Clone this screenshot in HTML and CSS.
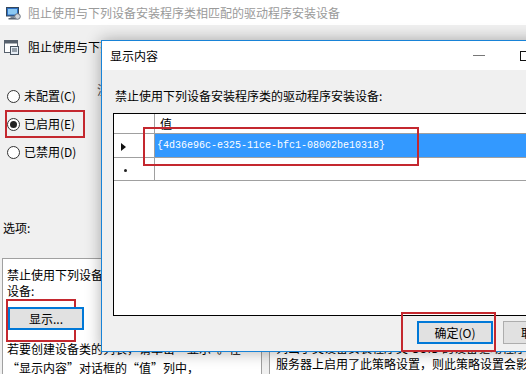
FILE: index.html
```html
<!DOCTYPE html>
<html lang="zh-CN">
<head>
  <meta charset="UTF-8" />
  <meta name="viewport" content="width=device-width, initial-scale=1.0"/>
  <title>显示内容</title>
  <link rel="stylesheet" href="styles.css">
</head>
<body>
  <div class="screen">
    <!-- 策略编辑窗口 -->
    <div class="titlebar">
      <svg class="app-icon" viewBox="0 0 16 16">
        <rect x="1.5" y="2.5" width="12" height="8.5" fill="#2c6fc4" stroke="#34465a"/>
        <rect x="3" y="4" width="9" height="5.5" fill="#8cc8f2"/>
        <rect x="5.5" y="11" width="4" height="2" fill="#7a8594"/>
        <rect x="3.5" y="13" width="8" height="1.5" fill="#5d6673"/>
        <circle cx="12.5" cy="11.5" r="2.8" fill="#d0d4da" stroke="#6b7480"/>
      </svg>
      <span>阻止使用与下列设备安装程序类相匹配的驱动程序安装设备</span>
    </div>

    <div class="header">
      <svg class="policy-icon" viewBox="0 0 15 15">
        <rect x="0.5" y="0.5" width="13" height="12" fill="#fff" stroke="#56606c"/>
        <rect x="0.5" y="0.5" width="13" height="3" fill="#56606c"/>
        <rect x="6.5" y="6.5" width="8" height="8" fill="#e6edf5" stroke="#46525f"/>
        <line x1="8" y1="9" x2="13" y2="9" stroke="#46525f"/>
        <line x1="8" y1="11" x2="13" y2="11" stroke="#46525f"/>
      </svg>
      <span>阻止使用与下列设备安装程序类相匹配的驱动程序安装设备</span>
    </div>

    <div class="settings">
      <div class="states">
        <div class="state"><span class="radio"></span>未配置(C)</div>
        <div class="state marked"><span class="radio checked"></span>已启用(E)</div>
        <div class="state"><span class="radio"></span>已禁用(D)</div>
      </div>
      <div class="comment">注释:</div>
    </div>

    <div class="options-label">选项:</div>

    <div class="panes">
      <div class="pane options">
        <p>禁止使用下列设备安装程序类的驱动程序安装设备:</p>
        <div class="show-wrap">
          <button class="btn focused show-btn">显示...</button>
        </div>
        <p class="hint">若要创建设备类的列表，请单击“显示”。在“显示内容”对话框的“值”列中，<br>键入表示设备安装程序类 GUID 的 GUID。</p>
      </div>
      <div class="pane help">
        <div class="line">此策略设置允许你为禁止 Windows 安装的设备驱动程序</div>
        <div class="line">指定设备安装程序类全局唯一标识符(GUID)的列表。</div>
        <div class="line">此策略设置的优先级高于允许 Windows 安装设备的</div>
        <div class="line">其他任何策略设置。</div>
        <div class="line">如果启用此策略设置，则 Windows 将无法安装或更新</div>
        <div class="line">列出了类设备安装程序类 GUID 的设备驱动程序。如果在远程桌面</div>
        <div class="line">服务器上启用了此策略设置，则此策略设置会影响从远程桌面</div>
      </div>
    </div>

    <!-- 显示内容 对话框 -->
    <div class="dialog">
      <div class="dlg-title">
        <span>显示内容</span>
        <div class="caption">
          <span class="cap-btn"><i class="min"></i></span>
          <span class="cap-btn"><i class="max"></i></span>
          <span class="cap-btn"></span>
        </div>
      </div>

      <div class="dlg-body">
        <div class="dlg-label">禁止使用下列设备安装程序类的驱动程序安装设备:</div>
        <div class="grid">
          <div class="grid-row head-row">
            <div class="row-head"></div>
            <div class="cell">值</div>
          </div>
          <div class="grid-row value-row">
            <div class="row-head"><i class="arrow"></i></div>
            <div class="cell selected">{4d36e96c-e325-11ce-bfc1-08002be10318}</div>
          </div>
          <div class="grid-row new-row">
            <div class="row-head"><i class="dot"></i></div>
            <div class="cell"></div>
          </div>
        </div>
        <div class="dlg-footer">
          <button class="btn focused ok-btn">确定(O)</button>
          <button class="btn">取消(C)</button>
        </div>
      </div>

      <div class="mark mark-value"></div>
      <div class="mark mark-ok"></div>
    </div>
  </div>
</body>
</html>
```

FILE: styles.css
```css
* {
  box-sizing: border-box;
}
html,
body {
  margin: 0;
}
body {
  font-family: "Noto Sans CJK SC", "Noto Sans", sans-serif;
  font-size: 12px;
  line-height: 16px;
  color: #000;
  background-color: #f0f0f0;
}
.screen {
  position: relative;
  width: 526px;
  height: 374px;
  overflow: hidden;
}
p {
  margin: 0;
}

/* 背景窗口 */
.titlebar {
  height: 25px;
  background-color: #fff;
  display: flex;
  align-items: center;
  gap: 7px;
  padding-left: 5px;
  color: #9a9a9a;
}
.app-icon {
  width: 16px;
  height: 16px;
}
.header {
  height: 44px;
  display: flex;
  align-items: center;
  gap: 9px;
  padding-left: 4px;
  white-space: nowrap;
}
.policy-icon {
  width: 15px;
  height: 15px;
}
.settings {
  display: flex;
  margin-top: 13px;
}
.states {
  width: 97px;
  flex-shrink: 0;
  display: flex;
  flex-direction: column;
}
.state {
  display: flex;
  align-items: center;
  gap: 4px;
  height: 28px;
  width: 80px;
  margin-left: 5px;
  padding-left: 2px;
}
.state.marked {
  outline: 2px solid #c4282f;
  outline-offset: -2px;
}
.radio {
  width: 13px;
  height: 13px;
  border: 1px solid #333;
  border-radius: 50%;
  background-color: #fff;
  display: flex;
  align-items: center;
  justify-content: center;
}
.radio.checked::after {
  content: "";
  width: 7px;
  height: 7px;
  border-radius: 50%;
  background-color: #222;
}
.comment {
  color: #555;
}
.options-label {
  margin-top: 54px;
  padding-left: 3px;
}
.panes {
  display: flex;
  gap: 7px;
  margin-top: 22px;
}
.pane {
  background-color: #fff;
  border: 1px solid #a0a0a0;
  border-bottom: none;
  height: 130px;
}
.options {
  width: 260px;
  flex-shrink: 0;
  margin-left: 2px;
  padding: 8px 10px 0 4px;
}
.show-wrap {
  width: 70px;
  height: 43px;
  margin-left: -1px;
  border: 2px solid #c4282f;
  padding-top: 6px;
}
.show-btn {
  width: 49px;
  height: 24px;
}
.hint {
  margin-top: -3px;
  line-height: 19px;
}
.help {
  flex: 1;
  min-width: 0;
  overflow: hidden;
  border-right: none;
  padding: 1px 0 0 6px;
}
.line {
  white-space: nowrap;
}

/* 按钮 */
.btn {
  font-family: inherit;
  font-size: 12px;
  line-height: 16px;
  color: #000;
  background-color: #e1e1e1;
  border: 1px solid #adadad;
  padding: 0;
  width: 76px;
  height: 23px;
}
.btn.focused {
  border: 2px solid #0078d7;
}

/* 对话框 */
.dialog {
  position: absolute;
  left: 101px;
  top: 40px;
  width: 494px;
  height: 312px;
  border: 1px solid #1883d7;
  background-color: #f0f0f0;
  box-shadow: 0 0 15px rgba(0, 0, 0, 0.32);
}
.dlg-title {
  height: 29px;
  background-color: #fff;
  display: flex;
  align-items: center;
  padding-left: 8px;
}
.caption {
  margin-left: auto;
  display: flex;
  height: 100%;
}
.cap-btn {
  width: 46px;
  display: flex;
  align-items: center;
  justify-content: center;
}
.min {
  width: 12px;
  height: 1px;
  background-color: #777;
}
.max {
  width: 10px;
  height: 10px;
  border: 1px solid #111;
}
.dlg-body {
  padding-top: 18px;
}
.dlg-label {
  margin-left: 13px;
  white-space: nowrap;
}
.grid {
  margin: 9px 0 0 11px;
  width: 470px;
  height: 203px;
  border: 1px solid #000;
  background-color: #fff;
}
.grid-row {
  display: flex;
  border-bottom: 1px solid #a0a0a0;
}
.head-row {
  height: 20px;
}
.value-row {
  height: 24px;
}
.new-row {
  height: 23px;
}
.row-head {
  width: 41px;
  border-right: 1px solid #a0a0a0;
  display: flex;
  align-items: center;
}
.cell {
  flex: 1;
  display: flex;
  align-items: center;
}
.head-row .cell {
  padding-left: 5px;
}
.cell.selected {
  background-color: #3399ff;
  color: #fff;
  padding-left: 2px;
  font-family: "Liberation Mono", monospace;
  font-size: 10px;
}
.arrow {
  margin: 3px 0 0 7px;
  border-left: 5px solid #111;
  border-top: 4.5px solid transparent;
  border-bottom: 4.5px solid transparent;
}
.dot {
  width: 3px;
  height: 3px;
  margin: 2px 0 0 10px;
  border-radius: 50%;
  background-color: #222;
}
.dlg-footer {
  height: 35px;
  display: flex;
  gap: 10px;
  padding: 5px 0 0 315px;
}

/* 红色标注框 */
.mark {
  position: absolute;
  border: 2px solid #c4282f;
}
.mark-value {
  left: 41px;
  top: 86px;
  width: 276px;
  height: 39px;
}
.mark-ok {
  left: 299px;
  top: 271px;
  width: 95px;
  height: 40px;
}
```
